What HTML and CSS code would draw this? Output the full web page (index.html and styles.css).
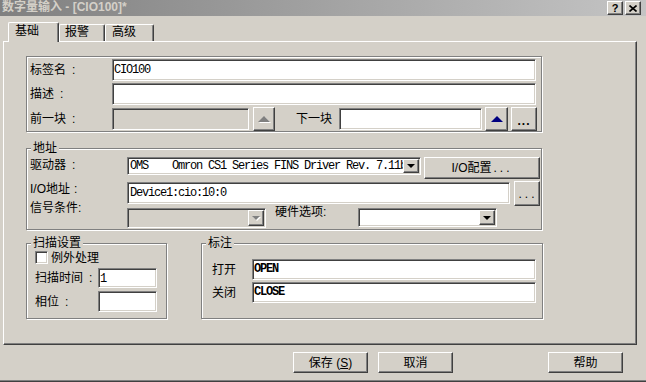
FILE: index.html
```html
<!DOCTYPE html>
<html>
<head>
   <meta http-equiv="Content-Type" content="text/html; charset=UTF-8" />
   <link rel="stylesheet" href="styles.css">
</head>
<body>

<div class="caption">
    <span class="caption-text">数字量输入 - [CIO100]*</span>
    <div class="caption-btns">
        <span class="cbtn help">?</span>
        <span class="cbtn"><svg width="8" height="7" viewBox="0 0 8 7"><path d="M0.5 0.5 L7.5 6.5 M7.5 0.5 L0.5 6.5" stroke="#000" stroke-width="1.6"/></svg></span>
    </div>
</div>

<div class="tabs">
    <div class="tab sel t1">基础</div>
    <div class="tab t2">报警</div>
    <div class="tab t3">高级</div>
</div>

<div class="panel">
    <div class="grp grp-tag">
        <div class="row r1">
            <span class="lbl lbl-tag">标签名<i>:</i></span>
            <div class="edit e-name">CIO100</div>
        </div>
        <div class="row r2">
            <span class="lbl lbl-tag">描述<i>:</i></span>
            <div class="edit e-name"></div>
        </div>
        <div class="row r3">
            <span class="lbl lbl-tag">前一块<i>:</i></span>
            <div class="edit dis e-prev"></div>
            <div class="btn b-up"><i class="tri-up off"></i></div>
            <span class="lbl lbl-next">下一块</span>
            <div class="edit e-next"></div>
            <div class="btn b-up2"><i class="tri-up"></i></div>
            <div class="btn b-more">...</div>
        </div>
    </div>

    <div class="grp grp-addr">
        <span class="grp-title">地址</span>
        <div class="row r1">
            <span class="lbl lbl-addr">驱动器<i>:</i></span>
            <div class="combo c-driver">
                <span class="combo-val">OMS    Omron CS1 Series FINS Driver Rev. 7.11b</span>
                <span class="drop"><i class="tri-down"></i></span>
            </div>
            <div class="btn b-io">I/O配置 <span class="dots">...</span></div>
        </div>
        <div class="row r2">
            <span class="lbl lbl-addr">I/O地址<i class="near">:</i></span>
            <div class="edit e-io">Device1:cio:10:0</div>
            <div class="btn b-iomore"><span class="dots">...</span></div>
        </div>
        <div class="row r3">
            <span class="lbl lbl-addr lbl-up">信号条件:</span>
            <div class="combo dis c-sig">
                <span class="combo-val"></span>
                <span class="drop"><i class="tri-down off"></i></span>
            </div>
            <span class="lbl lbl-hw">硬件选项:</span>
            <div class="combo c-hw">
                <span class="combo-val"></span>
                <span class="drop"><i class="tri-down"></i></span>
            </div>
        </div>
    </div>

    <div class="bottom">
        <div class="grp grp-scan">
            <span class="grp-title">扫描设置</span>
            <div class="row r1">
                <span class="chk"></span>
                <span class="chk-lbl">例外处理</span>
            </div>
            <div class="row r2">
                <span class="lbl lbl-scan">扫描时间<i>:</i></span>
                <div class="edit e-scan">1</div>
            </div>
            <div class="row r3">
                <span class="lbl lbl-scan">相位<i>:</i></span>
                <div class="edit e-scan"></div>
            </div>
        </div>

        <div class="grp grp-note">
            <span class="grp-title">标注</span>
            <div class="row r1">
                <span class="lbl lbl-note">打开</span>
                <div class="edit e-note">OPEN</div>
            </div>
            <div class="row r2">
                <span class="lbl lbl-note">关闭</span>
                <div class="edit e-note">CLOSE</div>
            </div>
        </div>
    </div>
</div>

<div class="foot">
    <div class="btn b-foot">保存 (<u>S</u>)</div>
    <div class="btn b-foot b-cancel">取消</div>
    <div class="btn b-foot b-help">帮助</div>
</div>

</body>
</html>
```

FILE: styles.css
```css
* {
    margin: 0; padding: 0;
    box-sizing: border-box;
}
body {
    width: 646px;
    height: 382px;
    overflow: hidden;
    background: #d4d0c8;
    font-family: "Liberation Sans", "Noto Sans CJK SC", sans-serif;
    font-size: 12px;
    line-height: 14px;
    color: #000;
    border-bottom: 1px solid #404040;
    box-shadow: inset 0 -1px #808080;
}

/* title bar */
.caption {
    height: 16px;
    display: flex;
    justify-content: space-between;
    align-items: flex-start;
    padding: 0 5px 0 2px;
    background: linear-gradient(to right, #808080, #c4c4c4);
}
.caption-text {
    color: #d4d0c8;
    font-weight: bold;
    line-height: 15px;
}
.caption-btns {
    display: flex;
    gap: 2px;
    padding-top: 1px;
}
.cbtn {
    width: 16px;
    height: 14px;
    display: flex;
    align-items: center;
    justify-content: center;
    background: #d4d0c8;
    border: 1px solid;
    border-color: #fff #404040 #404040 #fff;
    box-shadow: inset -1px -1px #808080;
}
.cbtn.help {
    font-weight: bold;
    font-size: 11px;
    line-height: 12px;
}

/* tabs */
.tabs {
    position: relative;
    z-index: 1;
    display: flex;
    align-items: flex-end;
    height: 19px;
    margin-top: 6px;
    padding-left: 8px;
}
.tab {
    height: 17px;
    padding-left: 5px;
    line-height: 15px;
    background: #d4d0c8;
    border: 1px solid;
    border-bottom: 0;
    border-color: #fff #404040 #404040 #fff;
    border-radius: 2px 2px 0 0;
    box-shadow: inset -1px 0 #808080;
}
.tab.sel {
    height: 20px;
    margin-bottom: -1px;
    padding-left: 6px;
    line-height: 16px;
}
.t1 { width: 51px; }
.t2 { width: 46px; }
.t3 { width: 49px; padding-left: 6px; }

/* tab page */
.panel {
    margin-left: 3px;
    width: 634px;
    height: 304px;
    padding: 14px 0 0 22px;
    border: 1px solid;
    border-color: #fff #404040 #404040 #fff;
    box-shadow: inset -1px -1px #808080;
}

/* group boxes */
.grp {
    position: relative;
    border: 1px solid #808080;
    box-shadow: inset 1px 1px #fff, 1px 1px #fff;
}
.grp-title {
    position: absolute;
    top: -8px;
    left: 4px;
    padding: 0 2px;
    line-height: 14px;
    background: #d4d0c8;
}
.row {
    display: flex;
    align-items: center;
}
.lbl {
    flex: none;
    white-space: nowrap;
}
.lbl i {
    font-style: normal;
    margin-left: 6px;
}
.lbl i.near { margin-left: 4px; }

/* sunken edit box */
.edit, .combo, .chk {
    flex: none;
    background: #fff;
    border: 1px solid;
    border-color: #808080 #fff #fff #808080;
    box-shadow: inset 1px 1px #404040, inset -1px -1px #d4d0c8;
}
.edit {
    height: 22px;
    padding-left: 1px;
    line-height: 20px;
    font-family: "Liberation Mono", monospace;
    letter-spacing: -1.2px;
    white-space: pre;
    overflow: hidden;
}
.edit.dis, .combo.dis { background: #d4d0c8; }

/* raised button */
.btn {
    flex: none;
    display: flex;
    align-items: center;
    justify-content: center;
    background: #d4d0c8;
    border: 1px solid;
    border-color: #fff #404040 #404040 #fff;
    box-shadow: inset -1px -1px #808080;
    white-space: nowrap;
}
.dots {
    letter-spacing: 3px;
    margin-left: 2px;
}

.tri-up {
    width: 0; height: 0;
    border-left: 6px solid transparent;
    border-right: 6px solid transparent;
    border-bottom: 6px solid #000080;
}
.tri-up.off {
    border-bottom-color: #808080;
    filter: drop-shadow(1px 1px 0 #fff);
}
.tri-down {
    width: 0; height: 0;
    border-left: 4px solid transparent;
    border-right: 4px solid transparent;
    border-top: 4px solid #000;
}
.tri-down.off {
    border-top-color: #808080;
    filter: drop-shadow(1px 1px 0 #fff);
}

/* combobox */
.combo {
    display: flex;
    height: 19px;
    padding: 1px;
}
.combo-val {
    flex: 1;
    overflow: hidden;
    white-space: pre;
    padding-left: 1px;
    line-height: 15px;
    font-family: "Liberation Mono", monospace;
    letter-spacing: -1.2px;
}
.drop {
    width: 16px;
    display: flex;
    align-items: center;
    justify-content: center;
    background: #d4d0c8;
    border: 1px solid;
    border-color: #fff #404040 #404040 #fff;
    box-shadow: inset -1px -1px #808080;
}

/* tag group */
.grp-tag {
    width: 516px;
    padding: 2px 0 0 3px;
}
.grp-tag .r1, .grp-tag .r2 { height: 22px; }
.grp-tag .r2 { margin-top: 2px; }
.grp-tag .r3 { height: 24px; margin-top: 2px; }
.lbl-tag { width: 82px; }
.e-name { width: 424px; }
.e-prev { width: 137px; }
.b-up { width: 22px; height: 24px; margin-left: 4px; }
.lbl-next { width: 64px; padding-left: 21px; }
.e-next { width: 143px; }
.b-up2 { width: 23px; height: 24px; margin-left: 3px; }
.b-more {
    width: 26px; height: 24px;
    margin-left: 3px;
    font-weight: bold;
    letter-spacing: 1px;
    padding-top: 3px;
}

/* address group */
.grp-addr {
    width: 516px;
    margin-top: 16px;
    padding: 8px 0 0 3px;
}
.grp-addr .row { align-items: flex-start; }
.grp-addr .r1 { height: 24px; }
.grp-addr .r2 { height: 26px; }
.grp-addr .r3 { height: 21px; margin-top: 1px; }
.lbl-addr { width: 97px; }
.grp-addr .r1 .lbl { line-height: 16px; }
.grp-addr .r2 .lbl { margin-top: 1px; }
.lbl-up { margin-top: -7px; }
.c-driver { width: 294px; height: 18px; }
.b-io { width: 116px; height: 22px; margin-left: 3px; }
.e-io { width: 383px; margin-top: 1px; padding-left: 2px; }
.b-iomore { width: 26px; height: 25px; margin-left: 4px; }
.c-sig { width: 139px; height: 20px; }
.lbl-hw { width: 92px; padding-left: 9px; margin-top: -3px; }
.c-hw { width: 139px; height: 19px; }

/* scan + note groups */
.bottom {
    display: flex;
    margin-top: 13px;
}
.grp-scan {
    width: 141px;
    padding: 7px 0 6px 8px;
}
.grp-scan .r1 { height: 13px; }
.grp-scan .r2 { height: 20px; margin-top: 4px; }
.grp-scan .r3 { height: 21px; margin-top: 3px; }
.chk { width: 13px; height: 13px; }
.chk-lbl { margin-left: 3px; }
.lbl-scan { width: 63px; }
.e-scan { width: 59px; height: 100%; }

.grp-note {
    width: 342px;
    margin-left: 34px;
    padding: 15px 0 0 10px;
}
.grp-note .r1 { height: 21px; }
.grp-note .r2 { height: 21px; margin-top: 2px; }
.lbl-note { width: 40px; }
.e-note {
    width: 284px;
    height: 21px;
    line-height: 19px;
    font-weight: bold;
    padding-left: 1px;
}

/* dialog buttons */
.foot {
    display: flex;
    margin-top: 7px;
    padding-left: 293px;
}
.b-foot { width: 75px; height: 21px; }
.b-foot u { text-decoration: underline; }
.b-cancel { margin-left: 10px; }
.b-help { margin-left: 95px; }
```
